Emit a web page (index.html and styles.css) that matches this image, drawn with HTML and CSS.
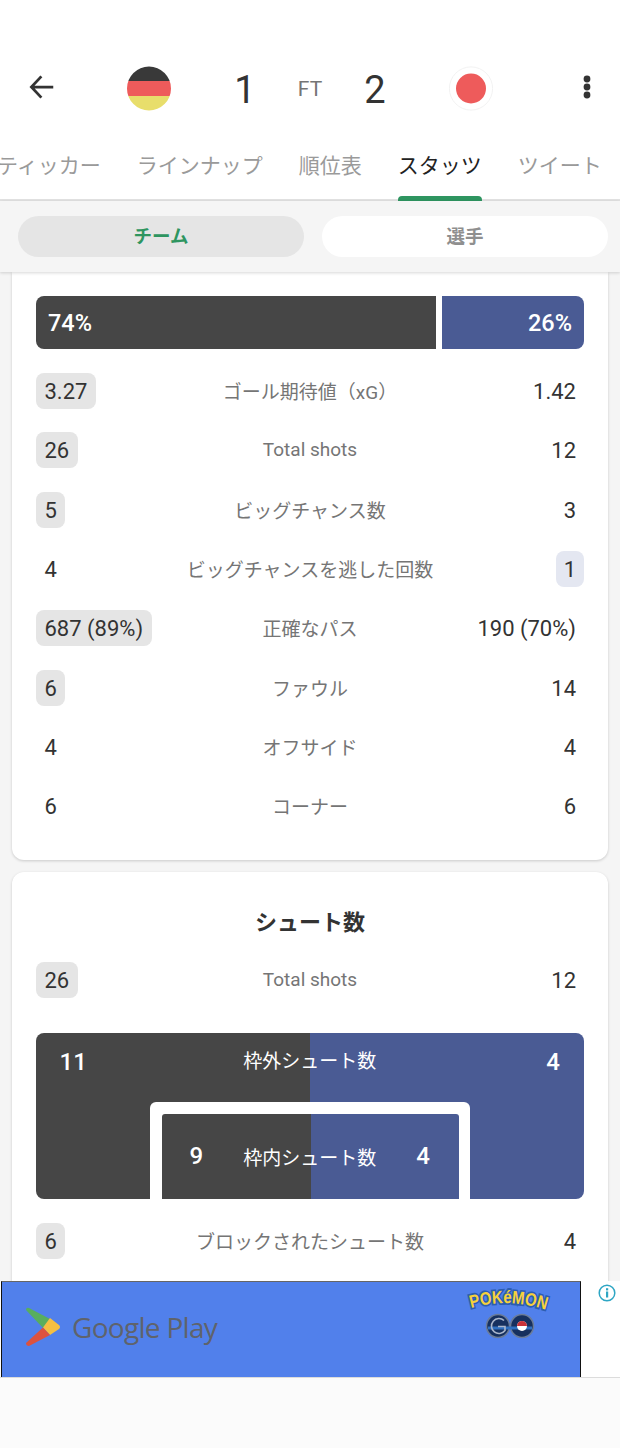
FILE: index.html
```html
<!DOCTYPE html>
<html lang="ja">
<head>
<meta charset="utf-8">
<title>Match stats</title>
<link rel="stylesheet" href="styles.css">
</head>
<body>
<div class="app">
  <header class="top">
    <div class="score">
      <svg class="back" viewBox="0 0 24 24" width="30" height="30"><path d="M21 12H4M11.5 3.5 3.5 12l8 8.5" fill="none" stroke="#333" stroke-width="2.2"/></svg>
      <svg class="flag de" viewBox="0 0 44 45" width="44" height="45"><defs><clipPath id="c"><circle cx="22" cy="22.5" r="22"/></clipPath></defs><g clip-path="url(#c)"><rect width="44" height="15" fill="#393939"/><rect y="15" width="44" height="15" fill="#ee5b5b"/><rect y="30" width="44" height="15" fill="#e8de6b"/></g></svg>
      <span class="goal g1">1</span>
      <span class="ft">FT</span>
      <span class="goal g2">2</span>
      <svg class="flag jp" viewBox="0 0 44 45" width="44" height="45"><circle cx="22" cy="22.5" r="21.6" fill="#fff" stroke="#efefef" stroke-width=".8"/><circle cx="22" cy="22.5" r="15" fill="#ee5b5b"/></svg>
      <svg class="more" viewBox="0 0 8 24" width="8" height="24"><circle cx="4" cy="4" r="3.4" fill="#333"/><circle cx="4" cy="12" r="3.4" fill="#333"/><circle cx="4" cy="20" r="3.4" fill="#333"/></svg>
    </div>
    <nav class="tabs">
      <span class="tab">ティッカー</span>
      <span class="tab">ラインナップ</span>
      <span class="tab">順位表</span>
      <span class="tab on">スタッツ</span>
      <span class="tab">ツイート</span>
    </nav>
  </header>
  <div class="seg">
    <span class="seg-btn sel">チーム</span>
    <span class="seg-btn">選手</span>
  </div>
  <main class="scroll">
    <section class="card first">
      <div class="bar">
        <span class="bar-a" style="width:400px">74%</span>
        <span class="bar-b" style="width:142px">26%</span>
      </div>
      <div class="rows">
        <div class="row"><span class="val pill">3.27</span><span class="lab">ゴール期待値（xG）</span><span class="val r">1.42</span></div>
        <div class="row"><span class="val pill">26</span><span class="lab">Total shots</span><span class="val r">12</span></div>
        <div class="row"><span class="val pill">5</span><span class="lab">ビッグチャンス数</span><span class="val r">3</span></div>
        <div class="row"><span class="val">4</span><span class="lab">ビッグチャンスを逃した回数</span><span class="val r pill-b">1</span></div>
        <div class="row"><span class="val pill">687 (89%)</span><span class="lab">正確なパス</span><span class="val r">190 (70%)</span></div>
        <div class="row"><span class="val pill">6</span><span class="lab">ファウル</span><span class="val r">14</span></div>
        <div class="row"><span class="val">4</span><span class="lab">オフサイド</span><span class="val r">4</span></div>
        <div class="row"><span class="val">6</span><span class="lab">コーナー</span><span class="val r">6</span></div>
      </div>
    </section>
    <section class="card second">
      <h2 class="title">シュート数</h2>
      <div class="row"><span class="val pill">26</span><span class="lab">Total shots</span><span class="val r">12</span></div>
      <div class="pitch">
        <div class="pitch-row outer"><b>11</b><span>枠外シュート数</span><b>4</b></div>
        <div class="frame">
          <div class="inner">
            <div class="pitch-row"><b>9</b><span>枠内シュート数</span><b>4</b></div>
          </div>
        </div>
      </div>
      <div class="row"><span class="val pill">6</span><span class="lab">ブロックされたシュート数</span><span class="val r">4</span></div>
    </section>
  </main>
  <aside class="ad">
    <div class="banner">
      <div class="gp">
        <svg viewBox="0 0 34 40" width="34" height="40"><path d="M0 3Q0 0 3 1L24 12 17 21Z" fill="#58ae5e"/><path d="M24 11 33 18Q35 20 33 22L24 28 17 20.500Z" fill="#f4bf42"/><path d="M17 20.500 24 28 3 39Q0 39 0 36Z" fill="#dc523f"/></svg>
        <span class="gp-text">Google Play</span>
      </div>
      <svg class="pogo" viewBox="0 0 84 54" width="84" height="54">
        <defs><path id="arc" d="M3 21Q42 10 81 24"/></defs>
        <text class="pk-s"><textPath href="#arc" textLength="76" lengthAdjust="spacingAndGlyphs">POKéMON</textPath></text>
        <text class="pk"><textPath href="#arc" textLength="76" lengthAdjust="spacingAndGlyphs">POKéMON</textPath></text>
        <circle cx="30" cy="39" r="11.500" fill="#16305f" stroke="#6b7c99" stroke-width="1.500"/>
        <circle cx="54" cy="39" r="11.500" fill="#16305f" stroke="#6b7c99" stroke-width="1.500"/>
        <path d="M20 41H64" stroke="#2f6fc0" stroke-width="3"/>
        <path d="M36 33.500a7.500 7.500 0 1 0 1 10v-4h-7" fill="none" stroke="#aab6cc" stroke-width="1.600"/>
        <circle cx="54" cy="39" r="5" fill="#fff"/>
        <path d="M49 39a5 5 0 0 1 10 0z" fill="#c8323a"/>
      </svg>
    </div>
    <div class="ad-side">
      <svg viewBox="0 0 18 18" width="18" height="18"><circle cx="9" cy="9" r="7.800" fill="#fff" stroke="#2ea6c4" stroke-width="1.500"/><rect x="8" y="7.500" width="2.200" height="6" fill="#2ea6c4"/><rect x="8" y="4.200" width="2.200" height="2.200" fill="#2ea6c4"/></svg>
    </div>
  </aside>
  <div class="footer"></div>
</div>
</body>
</html>
```

FILE: styles.css
```css
* { box-sizing: border-box; }
html, body { margin: 0; padding: 0; }
body {
  width: 620px;
  height: 1448px;
  overflow: hidden;
  background: #fbfbfb;
  font-family: Roboto, "Noto Sans CJK JP", sans-serif;
  color: #333;
}
.app { display: flex; flex-direction: column; height: 1448px; }

.top { height: 201px; background: #fff; border-bottom: 2px solid #e2e2e2; flex: none; }
.score {
  height: 136px;
  padding-top: 43px;
  display: flex;
  align-items: center;
  position: relative;
}
.back { margin-left: 27px; margin-top: -6px; }
.flag { flex: none; margin-top: -3px; }
.de { margin-left: 70px; }
.goal { font-size: 38px; line-height: 1; width: 30px; text-align: center; color: #333; }
.g1 { margin-left: 59px; margin-top: 1px; }
.ft { font-size: 21px; color: #757575; width: 40px; text-align: center; margin-left: 30px; margin-top: -2px; }
.g2 { margin-left: 30px; margin-top: 1px; }
.jp { margin-left: 59px; }
.more { margin-left: 90px; margin-top: -6px; }

.tabs {
  height: 63px;
  display: flex;
  gap: 36px;
  margin-left: -3px;
  white-space: nowrap;
  overflow: visible;
}
.tab {
  font-size: 21px;
  line-height: 30px;
  height: 65px;
  padding-top: 15px;
  color: #9a9a9a;
  position: relative;
}
.tab.on { color: #222; }
.tab.on::after {
  content: "";
  position: absolute;
  left: 0;
  right: 0;
  bottom: 0;
  height: 5px;
  background: #2e9560;
  border-radius: 4px 4px 0 0;
}

.seg {
  height: 71px;
  flex: none;
  background: #f5f5f5;
  display: flex;
  gap: 18px;
  padding: 15px 12px 15px 18px;
  position: relative;
  z-index: 2;
  box-shadow: 0 1px 3px rgba(0, 0, 0, .16);
}
.seg-btn {
  flex: 1;
  border-radius: 21px;
  background: #fff;
  color: #8f8f8f;
  font-size: 18.500px;
  font-weight: 700;
  line-height: 1;
  display: flex;
  align-items: center;
  justify-content: center;
  padding-top: 2px;
}
.seg-btn.sel { background: #e5e5e5; color: #2e9560; }

.scroll {
  height: 1009px;
  flex: none;
  overflow: hidden;
  background: #f5f5f5;
  padding: 0 12px;
}
.card {
  background: #fff;
  padding: 0 24px;
  border-radius: 12px;
  box-shadow: 0 1px 3px rgba(0, 0, 0, .18);
}
.first { border-radius: 0 0 12px 12px; padding-top: 24px; padding-bottom: 35px; margin-bottom: 12px; height: 588px; }
.bar { display: flex; gap: 6px; height: 53px; }
.bar span {
  display: flex;
  align-items: center;
  color: #fff;
  font-size: 23.500px;
  font-weight: 500;
  padding: 0 12px 0 12px;
}
.bar-a { background: #464646; border-radius: 8px 0 0 8px; }
.bar-b { background: #4a5b94; border-radius: 0 8px 8px 0; justify-content: flex-end; }
.rows { margin-top: 24px; display: flex; flex-direction: column; gap: 23.330px; }

.row {
  display: grid;
  grid-template-columns: 1fr auto 1fr;
  align-items: center;
  height: 36px;
}
.val {
  justify-self: start;
  font-size: 22px;
  line-height: 38px;
  height: 36px;
  padding: 0 8.500px;
  border-radius: 8px;
  color: #333;
  white-space: nowrap;
}
.val.r { justify-self: end; padding: 0 8px; }
.pill { background: #e5e5e5; }
.val.pill-b { background: #e4e7f1; }
.lab { font-size: 19px; color: #757575; white-space: nowrap; text-align: center; margin-top: -1px; }

.second { padding-top: 36px; height: 500px; }
.title { margin: 0 0 24px; height: 30px; font-size: 22px; line-height: 30px; font-weight: 700; text-align: center; color: #333; }
.pitch {
  height: 166px;
  margin: 35px 0 24px;
  border-radius: 8px;
  overflow: hidden;
  background: linear-gradient(90deg, #464646 50%, #4a5b94 50%);
  display: flex;
  flex-direction: column;
  align-items: center;
}
.pitch-row {
  display: grid;
  grid-template-columns: 1fr auto 1fr;
  align-items: center;
  color: #fff;
  width: 100%;
}
.pitch-row span { font-size: 19px; }
.pitch-row b { font-size: 24px; font-weight: 500; }
.pitch-row b:last-child { justify-self: end; }
.outer { height: 69px; padding: 0 24px 16px 23.500px; }
.outer b { margin-top: 4px; }
.frame {
  width: 320px;
  height: 97px;
  background: #fff;
  border-radius: 6px 6px 0 0;
  padding: 12px 11px 0 11.500px;
}
.inner {
  height: 85px;
  border-radius: 3px 3px 0 0;
  background: linear-gradient(90deg, #464646 148.500px, #4a5b94 148.500px);
  padding-top: 7px;
}
.inner .pitch-row { height: 70px; padding: 0 29px 0 28px; }

.ad { height: 97px; flex: none; display: flex; background: #fff; border-bottom: 1px solid #dcdcdc; }
.banner {
  width: 580px;
  background: #5180eb;
  border: 1px solid #111;
  border-top-color: #666;
  border-bottom: 0;
  margin-left: 1px;
  display: flex;
  align-items: flex-start;
  justify-content: space-between;
  padding: 4px 28px 0 24px;
}
.gp { display: flex; align-items: center; gap: 12px; margin-top: 21px; }
.gp-text { font-family: "Open Sans", sans-serif; font-size: 28px; letter-spacing: -.7px; color: #5f636b; line-height: 40px; }
.pogo { margin-top: 1px; overflow: visible; }
.pk, .pk-s { font-family: "Liberation Sans", sans-serif; font-weight: 700; font-size: 18px; }
.pk { fill: #f6d13c; }
.pk-s { fill: #2c5db0; stroke: #2c5db0; stroke-width: 3.500px; }
.ad-side { flex: 1; padding: 3px 0 0 17px; }
.footer { flex: 1; background: #fbfbfb; }
```
